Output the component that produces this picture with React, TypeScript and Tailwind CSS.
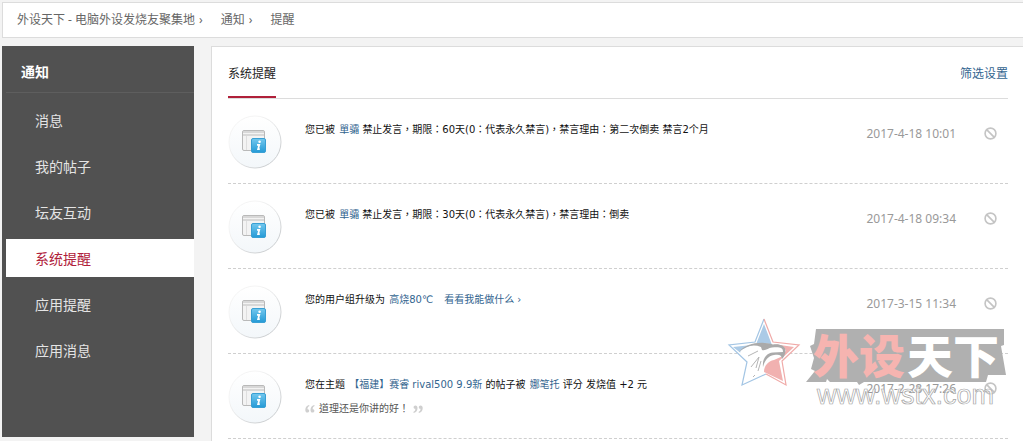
import type { ReactNode } from "react";
import { Ban } from "lucide-react";

const crumbs = ["外设天下 - 电脑外设发烧友聚集地", "通知", "提醒"];

const menuItems = ["消息", "我的帖子", "坛友互动", "系统提醒", "应用提醒", "应用消息"];

interface Notice {
  id: number;
  date: string;
  content: ReactNode;
  quote?: string;
}

function NoticeLink({ children }: { children: ReactNode }) {
  return (
    <a href="#" className="ml-px text-[#33658f] hover:underline">
      {children}
    </a>
  );
}

const notices: Notice[] = [
  {
    id: 1,
    date: "2017-4-18 10:01",
    content: (
      <>
        您已被 <NoticeLink>單骦</NoticeLink>{" "}
        禁止发言，期限：60天(0：代表永久禁言)，禁言理由：第二次倒卖 禁言2个月
      </>
    ),
  },
  {
    id: 2,
    date: "2017-4-18 09:34",
    content: (
      <>
        您已被 <NoticeLink>單骦</NoticeLink> 禁止发言，期限：30天(0：代表永久禁言)，禁言理由：倒卖
      </>
    ),
  },
  {
    id: 3,
    date: "2017-3-15 11:34",
    content: (
      <>
        您的用户组升级为 <NoticeLink>高烧80℃</NoticeLink>
        <span className="ml-[10px]">
          <NoticeLink>看看我能做什么 ›</NoticeLink>
        </span>
      </>
    ),
  },
  {
    id: 4,
    date: "2017-2-28 17:26",
    content: (
      <>
        您在主题 <NoticeLink>【福建】赛睿 rival500 9.9新</NoticeLink> 的帖子被{" "}
        <NoticeLink>娜笔托</NoticeLink> 评分 发烧值 +2 元
      </>
    ),
    quote: "道理还是你讲的好！",
  },
];

function SystemIcon() {
  return (
    <svg className="h-[54px] w-[54px] shrink-0" viewBox="0 0 54 54" aria-hidden="true">
      <defs>
        <linearGradient id="disc" x1="0" y1="0" x2="0" y2="1">
          <stop offset="0" stopColor="#ffffff" />
          <stop offset="1" stopColor="#f3f7fa" />
        </linearGradient>
        <linearGradient id="rim" x1="0" y1="0" x2="1" y2="1">
          <stop offset="0.3" stopColor="#f4f4f4" />
          <stop offset="1" stopColor="#bfc3c6" />
        </linearGradient>
        <linearGradient id="badge" x1="0" y1="0" x2="0" y2="1">
          <stop offset="0" stopColor="#74c8ee" />
          <stop offset="1" stopColor="#249ad6" />
        </linearGradient>
      </defs>
      <circle cx="27" cy="27" r="26" fill="url(#disc)" stroke="url(#rim)" />
      <rect x="14.5" y="15.5" width="22" height="20" rx="1.5" fill="#f3f3f3" stroke="#b9b9b9" />
      <path d="M15 17h21M15 20h21" stroke="#cfcfcf" strokeWidth="1.5" />
      <path d="M18.5 21v14" stroke="#dedede" />
      <rect x="23.5" y="23.5" width="14" height="14" rx="1.5" fill="url(#badge)" stroke="#3aa0d4" />
      <circle cx="31.6" cy="26.8" r="1.3" fill="#fff" />
      <path d="M29 29.8h2.300l-1.200 4.400h1.700" fill="none" stroke="#fff" strokeWidth="1.7" />
    </svg>
  );
}

function QuoteMark({ close = false }: { close?: boolean }) {
  return (
    <svg
      className={`h-2 w-[10px] ${close ? "rotate-180" : ""}`}
      viewBox="0 0 10 8"
      fill="#cfcfcf"
      aria-hidden="true"
    >
      <path d="M4 0C1.5.8.3 2.5.3 5c0 1.700.8 2.600 2 2.600S4.200 6.900 4.200 5.800 3.500 4.200 2.500 4.200C2.400 2.700 3 1.700 4.500 1z" />
      <path d="M9.200 0C6.700.8 5.500 2.500 5.500 5c0 1.700.8 2.600 2 2.600s1.900-.7 1.900-1.800-.7-1.600-1.700-1.600C7.600 2.700 8.200 1.700 9.700 1z" />
    </svg>
  );
}

function Watermark() {
  return (
    <svg
      className="pointer-events-none absolute top-[314px] right-3 h-[98px] w-[286px]"
      viewBox="0 0 286 98"
      aria-hidden="true"
    >
      <g fill="#fff" strokeWidth="1.2">
        <path d="M39 5 30 28 4 31 22 48 17 71 41 60" stroke="#a3c5e4" />
        <path d="M39 5 48 28 74 31 57 47 61 71 41 60" stroke="#f0aaa8" />
      </g>
      <path d="M39 10 47 31C41 28.500 36 28.500 31 30.500z" fill="#abcae6" />
      <path d="M8 33 32 30.500C25 31 20 34 15 38.500z" fill="#abcae6" />
      <path d="M48 30 69 33 54 47 58 67 39 58C39 52 43 47 49 46L58 42 61 36C57 33 53 31 48 30z" fill="#f1b1b0" />
      <path
        d="M15 37C24 30 38 29 48 32C56 31 60 34 59 38L57 42 54 41 47 43C41 45 39 50 38 57L21 65 24 47z"
        fill="#fff"
      />
      <path
        d="M14 38C21 28 38 27 48 30.500C55 29.500 60 32 60.500 36C60.500 40 59 43 57 45C57 41 54 40 49 41C43 42 40 46 38 53C37 44 42 39 48 38.500L58 38C58 33 54 33 47 33.500C43 34 41 37 37 36L36 33C28 30 21 32 14 38z"
        fill="#aaa"
      />
      <path d="M23 42 33 37M26 53 34 43 31 54M36 47 33 57M28 63l2-2" fill="none" stroke="#b5b5b5" />

      <path
        d="M91 15H279V31L276 32 281 61H263L261 68H139L134 71 132 68H105L102 65 101 68H81L90 57 86 55 89 44 85 32 89 30z"
        fill="#b0b0b0"
      />
      <g className="font-['Noto_Sans_CJK_SC',sans-serif] text-[46px] font-black">
        <text x="88" y="59" fill="#f6b4b0">
          外设
        </text>
        <text x="182" y="59" fill="#fff">
          天下
        </text>
      </g>
      <text
        x="92"
        y="90"
        className="font-['Liberation_Sans',sans-serif] text-[27px]"
        fill="#fff"
        fillOpacity="0.7"
        stroke="#a5a5a5"
        strokeWidth="0.7"
      >
        www.wstx.com
      </text>
    </svg>
  );
}

export default function App() {
  return (
    <div className="relative flex min-h-screen flex-col gap-2 bg-[#f3f3f3] pt-[2px] pl-[2px] font-['Noto_Sans','Noto_Sans_CJK_SC',sans-serif] text-xs text-[#666]">
      <nav className="flex h-9 items-center gap-[18px] border border-r-0 border-[#dcdcdc] bg-white pl-[14px]">
        {crumbs.map((crumb, index) => (
          <a key={crumb} href="#" className="flex gap-1">
            {crumb}
            {index < crumbs.length - 1 && <span>›</span>}
          </a>
        ))}
      </nav>

      <div className="flex flex-1 gap-[17px]">
        <aside className="mb-1 w-48 shrink-0 bg-[#515151] pl-1">
          <h2 className="mb-2 flex h-[47px] items-center border-b border-[#5e5e5e] pt-[6px] pl-[15px] text-sm font-bold text-white">
            通知
          </h2>
          <ul className="flex flex-col gap-2">
            {menuItems.map((item) => (
              <li key={item}>
                <a
                  href="#"
                  className={`flex h-[38px] items-center pt-[2px] pl-[29px] text-sm ${
                    item === "系统提醒" ? "bg-white text-[#b0203a]" : "text-[#e4e4e4]"
                  }`}
                >
                  {item}
                </a>
              </li>
            ))}
          </ul>
        </aside>

        <main className="min-w-0 flex-1 border-t border-l border-[#dcdcdc] bg-white pr-[15px] pl-4">
          <header className="flex h-[52px] items-stretch justify-between border-b border-[#dcdcdc]">
            <h1 className="flex items-center border-b-2 border-[#b0203a] pt-1 text-xs text-[#222]">
              系统提醒
            </h1>
            <a href="#" className="flex items-center pt-[2px] text-[#33658f]">
              筛选设置
            </a>
          </header>

          <ul>
            {notices.map((notice) => (
              <li
                key={notice.id}
                className="flex h-[85px] items-start border-b border-dashed border-[#cfcfcf] pt-4"
              >
                <SystemIcon />
                <div className="min-w-0 flex-1 pt-[7px] pl-[23px] font-['DejaVu_Sans','Noto_Sans_CJK_TC',sans-serif] text-[10px] leading-4">
                  <p className="text-[#111]">{notice.content}</p>
                  {notice.quote && (
                    <blockquote className="mt-2 flex items-center gap-1 text-[#555]">
                      <QuoteMark />
                      {notice.quote}
                      <QuoteMark close />
                    </blockquote>
                  )}
                </div>
                <time className="pt-[11px] leading-4 text-[#999]">{notice.date}</time>
                <button type="button" aria-label="屏蔽" className="mt-3 mr-[11px] ml-7 text-[#c4c4c4]">
                  <Ban size={13} strokeWidth={3} />
                </button>
              </li>
            ))}
          </ul>
        </main>
      </div>

      <Watermark />
    </div>
  );
}
